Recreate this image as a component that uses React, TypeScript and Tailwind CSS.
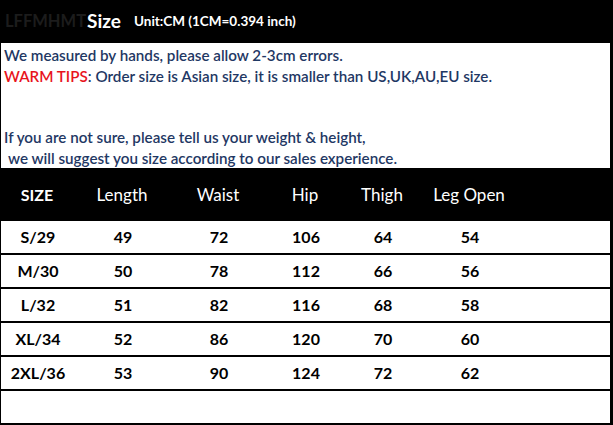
import React from "react";

const rows = [
  ["S/29", "49", "72", "106", "64", "54"],
  ["M/30", "50", "78", "112", "66", "56"],
  ["L/32", "51", "82", "116", "68", "58"],
  ["XL/34", "52", "86", "120", "70", "60"],
  ["2XL/36", "53", "90", "124", "72", "62"],
];
const heads = ["SIZE", "Length", "Waist", "Hip", "Thigh", "Leg Open"];
const grid = "grid grid-cols-[74px_96px_96px_78px_76px_98px_1fr] items-center";

export default function App() {
  return (
    <div className="w-[613px] h-[425px] bg-white overflow-hidden" style={{ fontFamily: "Lato, 'Open Sans', sans-serif" }}>
      <div className="h-[43px] bg-black flex items-center pl-[5px]">
        <span className="text-[#1c1c1c] font-bold text-[16.5px]">LFFMHMT</span>
        <span className="text-white font-bold text-[19px] ml-[1px]">Size</span>
        <span className="text-white font-bold text-[13.5px] ml-[13px]">Unit:CM (1CM=0.394 inch)</span>
      </div>
      <div className="h-[125px] border-l border-r-[3px] border-black pl-[3px] text-[#1f3864] text-[15.2px] font-semibold leading-[21px] pt-[2px]">
        <div>We measured by hands, please allow 2-3cm errors.</div>
        <div><span className="text-[#e8141c]">WARM TIPS</span>: Order size is Asian size, it is smaller than US,UK,AU,EU size.</div>
        <div className="mt-[40px]">If you are not sure, please tell us your weight &amp; height,</div>
        <div className="pl-[4px]">we will suggest you size according to our sales experience.</div>
      </div>
      <div className={`${grid} h-[53px] bg-black text-white text-[17px]`}>
        {heads.map((h, i) => (
          <div key={h} className={`text-center ${i === 0 ? "font-bold text-[16px]" : ""}`}>{h}</div>
        ))}
        <div />
      </div>
      <div className="border-l border-r-[3px] border-black">
        {rows.map((r) => (
          <div key={r[0]} className={`${grid} h-[34px] border-b-2 border-black text-black font-bold text-[16px]`}>
            {r.map((c, i) => (
              <div key={i} className="text-center">{c}</div>
            ))}
            <div />
          </div>
        ))}
        <div className="h-[34px] border-b-2 border-black" />
      </div>
    </div>
  );
}
